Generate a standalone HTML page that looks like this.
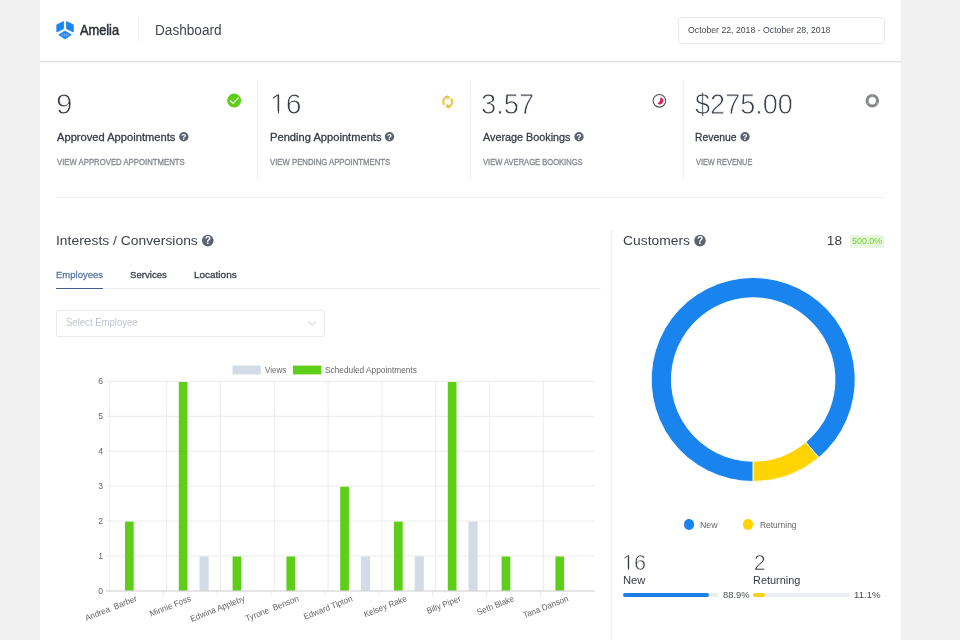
<!DOCTYPE html>
<html lang="en"><head><meta charset="utf-8"><title>Amelia Dashboard</title>
<style>
html,body{margin:0;padding:0}
body{will-change:transform;width:960px;height:640px;overflow:hidden;position:relative;background:#f1f1f1;font-family:"Liberation Sans",Arial,sans-serif;}
.panel{position:absolute;left:40.3px;top:0;width:860.9px;height:640px;background:#fff}
.t{position:absolute;white-space:pre;transform-origin:0 0;}
.b{position:absolute;}
.xl{position:absolute;white-space:pre;font-size:8.64px;line-height:10px;height:10px;color:#666;transform-origin:100% 50%;text-align:right}
svg{position:absolute;left:0;top:0;overflow:visible}
</style></head><body>
<div class="panel"></div>

<div class="b" style="left:40px;top:61px;width:861px;height:1px;background:#dfe2e7"></div>
<div class="b" style="left:40px;top:62px;width:861px;height:1px;background:#f1f2f4"></div>
<div class="b" style="left:137.7px;top:17px;width:1px;height:25px;background:#eef0f2"></div>
<div class="b" style="left:678.4px;top:16.6px;width:204.2px;height:25px;border:1px solid #e6e8ec;border-radius:3px"></div>
<div class="b" style="left:257px;top:80px;width:1px;height:100px;background:#eeeff1"></div>
<div class="b" style="left:470px;top:80px;width:1px;height:100px;background:#eeeff1"></div>
<div class="b" style="left:683px;top:80px;width:1px;height:100px;background:#eeeff1"></div>
<div class="b" style="left:57px;top:196.5px;width:828px;height:1px;background:#eeeff1"></div>
<div class="b" style="left:56.5px;top:288.3px;width:544px;height:1px;background:#eeeff1"></div>
<div class="b" style="left:56px;top:288px;width:47px;height:1.4px;background:#41618a"></div>
<div class="b" style="left:56.4px;top:310.4px;width:266.6px;height:24.6px;border:1px solid #e8eaee;border-radius:3px"></div>
<div class="b" style="left:610.7px;top:230px;width:1px;height:410px;background:#edeef0"></div>
<div class="b" style="left:850px;top:235px;width:34px;height:12.5px;background:#e8f8de;border-radius:2px"></div>
<div class="b" style="left:623px;top:592.5px;width:95.5px;height:4px;border-radius:2px;background:#ebeef2"></div>
<div class="b" style="left:623px;top:592.5px;width:86px;height:4px;border-radius:2px;background:#1a7fe6"></div>
<div class="b" style="left:753px;top:592.5px;width:97px;height:4px;border-radius:2px;background:#ebeef2"></div>
<div class="b" style="left:753.4px;top:592.5px;width:11.9px;height:4px;border-radius:2px;background:#fbd116"></div>
<div class="b" style="left:683.5px;top:519.4px;width:10.6px;height:10.6px;border-radius:50%;background:#1a84ee"></div>
<div class="b" style="left:742.8px;top:519.4px;width:10.6px;height:10.6px;border-radius:50%;background:#ffd400"></div>
<svg width="960" height="640" viewBox="0 0 960 640">
<g id="logo" fill="#1a84ee" stroke="#1a84ee" stroke-width="0.8" stroke-linejoin="round"><path d="M63.6 21.6 L56.8 24.8 L56.8 32 L63.6 28.7 Z"/><path d="M66.5 21.6 L73.3 24.8 L73.3 32 L66.5 28.7 Z"/><path d="M65.05 31 L58.8 34.7 L65.05 39 L71.3 34.7 Z"/><g stroke="#fff" stroke-width="0.55" fill="none" opacity="0.8"><path d="M62.3 33.6V36.2M64.3 33.4V36.6M66.2 33.4V36.6M68 33.8V36"/></g></g>
<g><circle cx="183.8" cy="136.8" r="4.7" fill="#5d6470"/><text x="183.8" y="139.71" font-size="8.22" font-weight="700" text-anchor="middle" fill="#fff" font-family="Liberation Sans, Arial, sans-serif">?</text></g>
<g><circle cx="389.5" cy="136.8" r="4.7" fill="#5d6470"/><text x="389.5" y="139.71" font-size="8.22" font-weight="700" text-anchor="middle" fill="#fff" font-family="Liberation Sans, Arial, sans-serif">?</text></g>
<g><circle cx="579" cy="136.8" r="4.7" fill="#5d6470"/><text x="579" y="139.71" font-size="8.22" font-weight="700" text-anchor="middle" fill="#fff" font-family="Liberation Sans, Arial, sans-serif">?</text></g>
<g><circle cx="745" cy="136.8" r="4.7" fill="#5d6470"/><text x="745" y="139.71" font-size="8.22" font-weight="700" text-anchor="middle" fill="#fff" font-family="Liberation Sans, Arial, sans-serif">?</text></g>
<g><circle cx="207.75" cy="240.6" r="5.8" fill="#5d6470"/><text x="207.75" y="244.20" font-size="10.15" font-weight="700" text-anchor="middle" fill="#fff" font-family="Liberation Sans, Arial, sans-serif">?</text></g>
<g><circle cx="700" cy="240.6" r="5.8" fill="#5d6470"/><text x="700" y="244.20" font-size="10.15" font-weight="700" text-anchor="middle" fill="#fff" font-family="Liberation Sans, Arial, sans-serif">?</text></g>
<g><circle cx="234.2" cy="100.6" r="7" fill="#5fce19"/><path d="M230.3 100.8 L233 103.4 L238.3 97.9" stroke="#fff" stroke-opacity="0.92" stroke-width="1.2" fill="none" stroke-linecap="round" stroke-linejoin="round"/></g>
<g fill="none" stroke="#eccb4e" stroke-width="2.5" transform="translate(447.7,101.8) scale(0.88,0.98) rotate(-12)"><path d="M-4.2 2.3 A4.6 4.6 0 0 1 1.6 -4.4"/><path d="M4.2 -2.3 A4.6 4.6 0 0 1 -1.6 4.4"/><path d="M0.2 -7.4 L3.9 -4.3 L0.2 -1.6 Z" fill="#eccb4e" stroke="none"/><path d="M-0.2 7.4 L-3.9 4.3 L-0.2 1.6 Z" fill="#eccb4e" stroke="none"/><circle cx="-0.3" cy="-5.4" r="0.55" fill="#8a8a6a" stroke="none"/><circle cx="0.6" cy="5.2" r="0.55" fill="#8a8a6a" stroke="none"/></g>
<g transform="translate(659.4,100.8)"><circle r="6.3" fill="#fff" stroke="#4a4f58" stroke-width="1.1"/><path d="M0.5 0.1 L1.07 -3.62 A3.7 3.7 0 1 1 -1.98 2.92 Z" fill="#e0245e"/></g>
<g transform="translate(872.3,100.8)"><circle r="5.2" fill="none" stroke="#85878b" stroke-width="3"/><path d="M0 -7 V-3.4 M6 3.4 L3 1.7 M-6 3.4 L-3 1.7" stroke="#b9bcc1" stroke-width="0.7"/></g>
<path d="M308.8 321.8 L312.3 325 L315.8 321.8" stroke="#c0c4cc" stroke-width="1" fill="none"/>
<g id="chart"><path d="M106 555.90 H594.7" stroke="#ececec" stroke-width="1"/><path d="M106 521.00 H594.7" stroke="#ececec" stroke-width="1"/><path d="M106 486.10 H594.7" stroke="#ececec" stroke-width="1"/><path d="M106 451.20 H594.7" stroke="#ececec" stroke-width="1"/><path d="M106 416.30 H594.7" stroke="#ececec" stroke-width="1"/><path d="M106 381.40 H594.7" stroke="#ececec" stroke-width="1"/><path d="M109.7 381.40 V590.8" stroke="#ececec" stroke-width="1"/><path d="M166.70 381.40 V590.8" stroke="#ececec" stroke-width="1"/><path d="M163.29 590.8 V596.8" stroke="#ececec" stroke-width="1"/><path d="M220.50 381.40 V590.8" stroke="#ececec" stroke-width="1"/><path d="M217.18 590.8 V596.8" stroke="#ececec" stroke-width="1"/><path d="M274.30 381.40 V590.8" stroke="#ececec" stroke-width="1"/><path d="M271.07 590.8 V596.8" stroke="#ececec" stroke-width="1"/><path d="M328.10 381.40 V590.8" stroke="#ececec" stroke-width="1"/><path d="M324.96 590.8 V596.8" stroke="#ececec" stroke-width="1"/><path d="M381.90 381.40 V590.8" stroke="#ececec" stroke-width="1"/><path d="M378.85 590.8 V596.8" stroke="#ececec" stroke-width="1"/><path d="M435.70 381.40 V590.8" stroke="#ececec" stroke-width="1"/><path d="M432.74 590.8 V596.8" stroke="#ececec" stroke-width="1"/><path d="M489.50 381.40 V590.8" stroke="#ececec" stroke-width="1"/><path d="M486.63 590.8 V596.8" stroke="#ececec" stroke-width="1"/><path d="M543.30 381.40 V590.8" stroke="#ececec" stroke-width="1"/><path d="M540.52 590.8 V596.8" stroke="#ececec" stroke-width="1"/><rect x="125.00" y="521.60" width="8.7" height="69.20" fill="#5fce19"/><rect x="178.80" y="382.00" width="8.7" height="208.80" fill="#5fce19"/><rect x="199.45" y="556.50" width="9.2" height="34.30" fill="#d3dce6"/><rect x="232.60" y="556.50" width="8.7" height="34.30" fill="#5fce19"/><rect x="286.40" y="556.50" width="8.7" height="34.30" fill="#5fce19"/><rect x="340.20" y="486.70" width="8.7" height="104.10" fill="#5fce19"/><rect x="360.85" y="556.50" width="9.2" height="34.30" fill="#d3dce6"/><rect x="394.00" y="521.60" width="8.7" height="69.20" fill="#5fce19"/><rect x="414.65" y="556.50" width="9.2" height="34.30" fill="#d3dce6"/><rect x="447.80" y="382.00" width="8.7" height="208.80" fill="#5fce19"/><rect x="468.45" y="521.60" width="9.2" height="69.20" fill="#d3dce6"/><rect x="501.60" y="556.50" width="8.7" height="34.30" fill="#5fce19"/><rect x="555.40" y="556.50" width="8.7" height="34.30" fill="#5fce19"/><path d="M106 591.0 H594.7" stroke="#cbcbcd" stroke-width="1.2"/><rect x="232.5" y="365.6" width="28.3" height="8.8" fill="#d3dce6"/><rect x="293" y="365.6" width="28.3" height="8.8" fill="#5fce19"/></g>
<g id="donut"><path d="M753.20 481.50 A102.0 102.0 0 1 1 818.76 457.64 L805.78 442.16 A81.8 81.8 0 1 0 753.20 461.30 Z" fill="#1a84ee" stroke="#fff" stroke-width="0.9" stroke-linejoin="round"/><path d="M818.76 457.64 A102.0 102.0 0 0 1 753.20 481.50 L753.20 461.30 A81.8 81.8 0 0 0 805.78 442.16 Z" fill="#ffd400" stroke="#fff" stroke-width="0.9" stroke-linejoin="round"/></g>
</svg>
<div class="xl" style="right:823.35px;top:592.50px;transform:rotate(-21.5deg) scaleX(0.94)">Andrea  Barber</div>
<div class="xl" style="right:769.46px;top:592.50px;transform:rotate(-21.5deg) scaleX(0.94)">Minnie Foss</div>
<div class="xl" style="right:715.57px;top:592.50px;transform:rotate(-21.5deg) scaleX(0.94)">Edwina Appleby</div>
<div class="xl" style="right:661.68px;top:592.50px;transform:rotate(-21.5deg) scaleX(0.94)">Tyrone  Benson</div>
<div class="xl" style="right:607.79px;top:592.50px;transform:rotate(-21.5deg) scaleX(0.94)">Edward Tipton</div>
<div class="xl" style="right:553.90px;top:592.50px;transform:rotate(-21.5deg) scaleX(0.94)">Kelsey Rake</div>
<div class="xl" style="right:500.01px;top:592.50px;transform:rotate(-21.5deg) scaleX(0.94)">Billy Piper</div>
<div class="xl" style="right:446.12px;top:592.50px;transform:rotate(-21.5deg) scaleX(0.94)">Seth Blake</div>
<div class="xl" style="right:392.23px;top:592.50px;transform:rotate(-21.5deg) scaleX(0.94)">Tana Danson</div>
<div class="t" style="left:80.32px;top:22px;font-size:14px;line-height:16px;font-weight:400;color:#2d3037;transform:scaleX(0.9131);-webkit-text-stroke:0.5px #2d3037;">Amelia</div>
<div class="t" style="left:154.76px;top:22px;font-size:14px;line-height:16px;font-weight:400;color:#41464f;transform:scaleX(0.9727);">Dashboard</div>
<div class="t" style="left:688.45px;top:24px;font-size:9.4px;line-height:11px;font-weight:400;color:#454950;transform:scaleX(0.9289);">October 22, 2018 - October 28, 2018</div>
<div class="t" style="left:56.01px;top:87px;font-size:29.6px;line-height:33px;font-weight:400;color:#363b45;-webkit-text-stroke:0.8px #fff;">9</div>
<div class="t" style="left:269.59px;top:87px;font-size:29.6px;line-height:33px;font-weight:400;color:#363b45;transform:scaleX(0.9585);-webkit-text-stroke:0.8px #fff;">16</div>
<div class="t" style="left:481.46px;top:87px;font-size:29.6px;line-height:33px;font-weight:400;color:#363b45;transform:scaleX(0.9225);-webkit-text-stroke:0.8px #fff;">3.57</div>
<div class="t" style="left:694.89px;top:87px;font-size:29.6px;line-height:33px;font-weight:400;color:#363b45;transform:scaleX(0.9153);-webkit-text-stroke:0.8px #fff;">$275.00</div>
<div class="t" style="left:57.30px;top:130px;font-size:11.8px;line-height:14px;font-weight:400;color:#363b45;transform:scaleX(0.9447);-webkit-text-stroke:0.3px #363b45;">Approved Appointments</div>
<div class="t" style="left:269.62px;top:130px;font-size:11.8px;line-height:14px;font-weight:400;color:#363b45;transform:scaleX(0.9447);-webkit-text-stroke:0.3px #363b45;">Pending Appointments</div>
<div class="t" style="left:482.71px;top:130px;font-size:11.8px;line-height:14px;font-weight:400;color:#363b45;transform:scaleX(0.9157);-webkit-text-stroke:0.3px #363b45;">Average Bookings</div>
<div class="t" style="left:695.17px;top:130px;font-size:11.8px;line-height:14px;font-weight:400;color:#363b45;transform:scaleX(0.8794);-webkit-text-stroke:0.3px #363b45;">Revenue</div>
<div class="t" style="left:57.29px;top:156px;font-size:9.5px;line-height:11px;font-weight:400;color:#868a91;transform:scaleX(0.8171);-webkit-text-stroke:0.35px #868a91;">VIEW APPROVED APPOINTMENTS</div>
<div class="t" style="left:270.19px;top:156px;font-size:9.5px;line-height:11px;font-weight:400;color:#868a91;transform:scaleX(0.8161);-webkit-text-stroke:0.35px #868a91;">VIEW PENDING APPOINTMENTS</div>
<div class="t" style="left:482.72px;top:156px;font-size:9.5px;line-height:11px;font-weight:400;color:#868a91;transform:scaleX(0.7974);-webkit-text-stroke:0.35px #868a91;">VIEW AVERAGE BOOKINGS</div>
<div class="t" style="left:695.76px;top:156px;font-size:9.5px;line-height:11px;font-weight:400;color:#868a91;transform:scaleX(0.7725);-webkit-text-stroke:0.35px #868a91;">VIEW REVENUE</div>
<div class="t" style="left:55.90px;top:233px;font-size:13.7px;line-height:15px;font-weight:400;color:#3a3f4a;transform:scaleX(1.0130);">Interests / Conversions</div>
<div class="t" style="left:622.86px;top:233px;font-size:13.7px;line-height:15px;font-weight:400;color:#3a3f4a;transform:scaleX(1.0130);">Customers</div>
<div class="t" style="left:826.84px;top:233px;font-size:13.7px;line-height:15px;font-weight:400;color:#3a3f4a;transform:scaleX(1.0000);">18</div>
<div class="t" style="left:852.05px;top:236px;font-size:8.6px;line-height:10px;font-weight:400;color:#6fd030;transform:scaleX(1.0380);">500.0%</div>
<div class="t" style="left:56.32px;top:269px;font-size:9.8px;line-height:11px;font-weight:400;color:#5b7ba0;transform:scaleX(0.9716);-webkit-text-stroke:0.3px #5b7ba0;">Employees</div>
<div class="t" style="left:130.19px;top:269px;font-size:9.8px;line-height:11px;font-weight:400;color:#3a3f4a;transform:scaleX(0.9823);-webkit-text-stroke:0.3px #3a3f4a;">Services</div>
<div class="t" style="left:194.13px;top:269px;font-size:9.8px;line-height:11px;font-weight:400;color:#3a3f4a;transform:scaleX(1.0170);-webkit-text-stroke:0.3px #3a3f4a;">Locations</div>
<div class="t" style="left:66.27px;top:317px;font-size:10px;line-height:11px;font-weight:400;color:#c0c4cc;transform:scaleX(0.9552);">Select Employee</div>
<div class="t" style="left:265.37px;top:365px;font-size:8.64px;line-height:10px;font-weight:400;color:#666;transform:scaleX(0.9275);">Views</div>
<div class="t" style="left:324.63px;top:365px;font-size:8.64px;line-height:10px;font-weight:400;color:#666;transform:scaleX(0.9622);">Scheduled Appointments</div>
<div class="t" style="left:699.89px;top:520px;font-size:8.64px;line-height:10px;font-weight:400;color:#666;transform:scaleX(1.0193);">New</div>
<div class="t" style="left:759.66px;top:520px;font-size:8.64px;line-height:10px;font-weight:400;color:#666;transform:scaleX(0.9762);">Returning</div>
<div class="t" style="left:622.40px;top:551px;font-size:21.4px;line-height:24px;font-weight:400;color:#363b45;transform:scaleX(1.0179);-webkit-text-stroke:0.55px #fff;">16</div>
<div class="t" style="left:753.70px;top:551px;font-size:21.4px;line-height:24px;font-weight:400;color:#363b45;-webkit-text-stroke:0.55px #fff;">2</div>
<div class="t" style="left:622.80px;top:573px;font-size:11.8px;line-height:14px;font-weight:400;color:#363b45;transform:scaleX(0.9492);">New</div>
<div class="t" style="left:753.47px;top:573px;font-size:11.8px;line-height:14px;font-weight:400;color:#363b45;transform:scaleX(0.9256);">Returning</div>
<div class="t" style="left:723.24px;top:589px;font-size:9.6px;line-height:11px;font-weight:400;color:#4a4e56;transform:scaleX(0.9739);">88.9%</div>
<div class="t" style="left:854.01px;top:589px;font-size:9.6px;line-height:11px;font-weight:400;color:#4a4e56;transform:scaleX(1.0052);">11.1%</div>
<div class="t" style="left:98.33px;top:586px;font-size:8.64px;line-height:10px;font-weight:400;color:#666;">0</div>
<div class="t" style="left:98.19px;top:551px;font-size:8.64px;line-height:10px;font-weight:400;color:#666;">1</div>
<div class="t" style="left:98.34px;top:516px;font-size:8.64px;line-height:10px;font-weight:400;color:#666;">2</div>
<div class="t" style="left:98.32px;top:481px;font-size:8.64px;line-height:10px;font-weight:400;color:#666;">3</div>
<div class="t" style="left:98.37px;top:446px;font-size:8.64px;line-height:10px;font-weight:400;color:#666;">4</div>
<div class="t" style="left:98.25px;top:411px;font-size:8.64px;line-height:10px;font-weight:400;color:#666;">5</div>
<div class="t" style="left:98.33px;top:376px;font-size:8.64px;line-height:10px;font-weight:400;color:#666;">6</div>
<div class="b" style="left:271.4px;top:110.8px;width:6.2px;height:3.6px;background:#fff"></div>
<div class="b" style="left:279.2px;top:110.8px;width:6.6px;height:3.6px;background:#fff"></div>
<div class="b" style="left:622.4px;top:567.8px;width:5.4px;height:2.6px;background:#fff"></div>
<div class="b" style="left:629.2px;top:567.8px;width:4.6px;height:2.6px;background:#fff"></div>
</body></html>
